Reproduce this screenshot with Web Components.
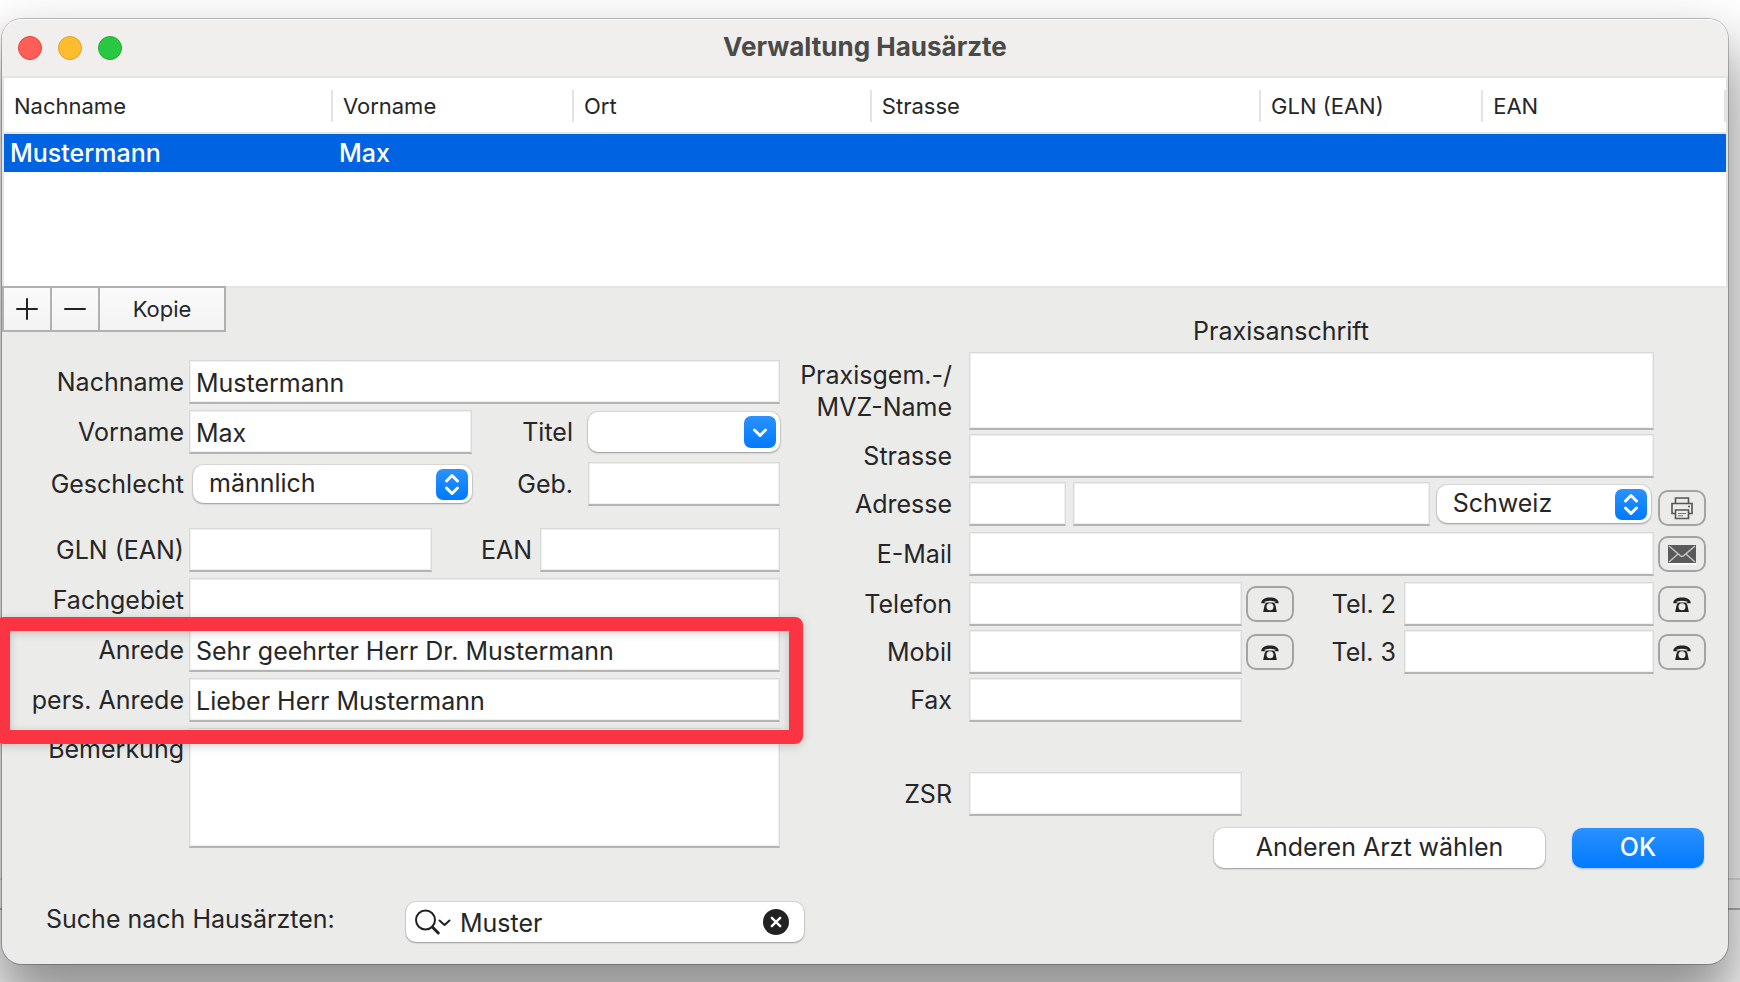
<!DOCTYPE html>
<html lang="de">
<head>
<meta charset="utf-8">
<title>Verwaltung Hausärzte</title>
<style>
  html { background: #fff; }
  body {
    margin: 0;
    min-height: 100vh;
    box-sizing: border-box;
    padding: 19px 12px 18px 2px;
    overflow: hidden;
    position: relative;
    font: 25px/32px Inter, "Liberation Sans", sans-serif;
    color: #262626;
  }
</style>
</head>
<body>
<desk-backdrop></desk-backdrop>
<mac-window heading="Verwaltung Hausärzte">
  <doctor-table></doctor-table>
  <doctor-form></doctor-form>
</mac-window>

<script>
const define = (name, html, setup) => {
  const template = document.createElement('template');
  template.innerHTML = html;
  customElements.define(name, class extends HTMLElement {
    connectedCallback() {
      if (this.shadowRoot) return;
      const root = this.attachShadow({ mode: 'open' });
      root.append(template.content.cloneNode(true));
      if (setup) setup(this, root);
    }
  });
};

/* Edges of the window that lies behind the dialog */
define('desk-backdrop', `
  <style>
    :host { position: absolute; inset: auto 0 72px 0; height: 32px; display: block;
      border-top: 2px solid #e4e4e4; border-bottom: 2px solid #b8b8b8; box-sizing: border-box; }
  </style>`);

define('mac-window', `
  <style>
    :host { display: block; position: relative; background: #ebebea; border-radius: 20px;
      box-shadow: 0 0 0 1px rgba(0,0,0,.24), 0 36px 60px 8px rgba(0,0,0,.44); }
    header { display: grid; grid-template-columns: 140px 1fr 140px; align-items: center; height: 57px;
      box-sizing: border-box; padding: 0 16px; background: #f0efed; border-radius: 20px 20px 0 0;
      box-shadow: inset 0 2px 0 -1px #fff; }
    .lights { display: flex; gap: 16px; }
    .lights button { width: 24px; height: 24px; padding: 0; border-radius: 50%; border: 1px solid var(--rim); background: var(--fill); }
    .close { --fill: #ff5f57; --rim: #e2463f; }
    .min { --fill: #febc2e; --rim: #e0a028; }
    .max { --fill: #28c840; --rim: #1fa931; }
    h1 { margin: 0; padding-bottom: 2px; font-size: 26px; line-height: 32px; font-weight: 700; color: #4a4a48; text-align: center; }
  </style>
  <header>
    <div class="lights">
      <button class="close" aria-label="Schliessen"></button>
      <button class="min" aria-label="Minimieren"></button>
      <button class="max" aria-label="Zoomen"></button>
    </div>
    <h1></h1>
  </header>
  <slot></slot>`, (host, root) => {
  root.querySelector('h1').textContent = host.getAttribute('heading');
});

define('doctor-table', `
  <style>
    :host { display: block; box-sizing: border-box; min-height: 212px; background: #fff; border: 2px solid #e4e4e3; }
    table { width: 100%; border-collapse: separate; border-spacing: 0; table-layout: fixed; }
    th { padding: 12px 0 10px; font-size: 22px; line-height: 32px; font-weight: 400; text-align: left;
      border-bottom: 2px solid #e6e6e6; }
    th span { display: block; padding-left: 10px; border-right: 2px solid #e4e4e4; }
    td { height: 38px; padding: 0 0 0 6px; line-height: 32px; color: #fff; font-weight: 500; background: #0063e1; }
  </style>
  <table>
    <colgroup><col style="width:19.100%"><col style="width:14%"><col style="width:17.300%"><col style="width:22.600%"><col style="width:12.900%"><col></colgroup>
    <thead><tr><th><span>Nachname</span></th><th><span>Vorname</span></th><th><span>Ort</span></th><th><span>Strasse</span></th><th><span>GLN (EAN)</span></th><th><span>EAN</span></th></tr></thead>
    <tbody><tr><td>Mustermann</td><td>Max</td><td></td><td></td><td></td><td></td></tr></tbody>
  </table>`);

/* Label and control in one row. kind: text | area | select | combo */
const controls = {
  text: '<input id="c" class="box">',
  area: '<textarea id="c" class="box"></textarea>',
  select: `<span class="pop"><select id="c"><option></option></select>
    <svg class="badge" viewBox="0 0 32 31"><defs><linearGradient id="g" x2="0" y2="1"><stop stop-color="#2b91ff"/><stop offset="1" stop-color="#007aff"/></linearGradient></defs>
    <rect width="32" height="31" rx="7" fill="url(#g)"/><path d="M10.500 12l5.500-5.500 5.500 5.500M10.500 19l5.500 5.500 5.500-5.500" fill="none" stroke="#fff" stroke-width="3" stroke-linecap="round" stroke-linejoin="round"/></svg></span>`,
  combo: `<span class="pop combo"><input id="c"><button class="badge" aria-label="Titel wählen"><svg viewBox="0 0 32 32"><path d="M10.500 14l5.500 5.500 5.500-5.500" fill="none" stroke="#fff" stroke-width="3" stroke-linecap="round" stroke-linejoin="round"/></svg></button></span>`
};
define('form-field', `
  <style>
    :host { display: flex; align-items: center; min-width: 0; flex: 1 1 0; }
    label { flex: 0 0 var(--label, 187px); box-sizing: border-box; padding-right: var(--label-gap, 5px);
      text-align: right; white-space: pre-line; }
    :host([area-top]) { align-items: flex-start; }
    :host([area-top]) label { padding-top: 5px; }
    input, textarea, select { font: inherit; color: inherit; box-sizing: border-box; margin: 0; outline: none; min-width: 0; }
    .box { flex: 1 1 0; width: 0; height: 44px; padding: 2px 6px 0; border: 1px solid #d9d9d8; border-bottom: 2px solid #b4b4b3;
      border-radius: 0; background: #fff; box-shadow: inset 0 0 0 1px #efefef; }
    textarea.box { height: var(--area, 120px); resize: none; }
    .pop { flex: 1 1 0; min-width: 0; position: relative; display: flex; height: 38px; margin-left: 4px; border-radius: 10px;
      background: #fff; box-shadow: 0 0 0 1px rgba(0,0,0,.07), 0 1px 2px rgba(0,0,0,.3); }
    .pop select { flex: 1; appearance: none; border: 0; background: none; padding: 0 44px 2px 16px; }
    .badge { position: absolute; right: 4px; top: 4px; width: 32px; height: 31px; pointer-events: none; }
    .combo { height: 40px; margin-left: 0; }
    .combo input { flex: 1; border: 0; background: none; padding: 0 44px 0 8px; }
    .combo .badge { height: 32px; padding: 0; border: 0; border-radius: 7px; background: linear-gradient(#2b91ff, #007aff); }
    .combo svg { display: block; }
    :host([nolabel]) .pop { margin-left: 0; }
  </style>
  <label for="c"></label>`, (host, root) => {
  const kind = host.getAttribute('kind') || 'text';
  const label = root.querySelector('label');
  const text = host.getAttribute('label').replace('|', '\n');
  if (host.hasAttribute('nolabel')) label.remove(); else label.textContent = text;
  root.append(document.createRange().createContextualFragment(controls[kind]));
  const control = root.getElementById('c');
  if (host.hasAttribute('nolabel')) control.setAttribute('aria-label', text);
  const value = host.getAttribute('value') || '';
  if (kind === 'select') control.options[0].textContent = value;
  else control.value = value;
});

const icons = {
  phone: '<path d="M15.300 17.200C15.300 13.500 19 11.600 24 11.600s8.700 1.900 8.700 5.600h-4.200v-1.700c-2.800-.9-6.200-.9-9 0v1.700z"/><path d="M20 16.500h8l1.500 3 1.300 6.500H17.200l1.300-6.500z"/><circle cx="24" cy="20.800" r="3.500" fill="#ebebea"/><path d="M18.500 16h2.500M27 16h2.500" stroke="#ebebea" stroke-width=".8"/>',
  printer: '<g fill="none" stroke="#555" stroke-width="1.600"><path d="M17.500 13.500v-5.500h13v5.500M18 23.500h-4V13.500h20v10h-4"/><path d="M17.500 20h13v8.500h-13z"/></g><path d="M20 23.500h8M20 25.800h5" stroke="#777"/><circle cx="31" cy="16.500" r="1" fill="#555"/>',
  mail: '<rect x="10" y="9" width="28" height="18" fill="#5a5a5a"/><path d="M10 28h28" stroke="#fafafa" stroke-width="2"/><path d="M11 10l10.500 9q2.500 3 5 0L37 10M11 26l9-8M37 26l-9-8" fill="none" stroke="#c4c4c4" stroke-width="1.500"/>'
};
define('icon-button', `
  <style>
    :host { display: block; flex: 0 0 48px; }
    button { display: block; width: 48px; height: 36px; padding: 0; background: none; border: 2px solid #a3a3a2; border-radius: 10px; }
    svg { display: block; width: 48px; height: 36px; margin: -2px; fill: #222; }
  </style>
  <button><svg viewBox="0 0 48 36"></svg></button>`, (host, root) => {
  root.querySelector('svg').innerHTML = icons[host.getAttribute('icon')];
  root.querySelector('button').setAttribute('aria-label', host.getAttribute('label'));
});

define('list-toolbar', `
  <style>
    :host { display: flex; width: 224px; height: 46px; margin-top: -2px; box-sizing: border-box; border: 2px solid #b1b1b0; background: #b1b1b0; gap: 2px; }
    button { flex: 0 0 46px; display: grid; place-items: center; padding: 0; border: 0; font: inherit; font-size: 22px; color: inherit;
      background: linear-gradient(#fafafa, #f3f3f3); }
    button:last-child { flex: 1; }
    svg { width: 22px; height: 22px; stroke: #222; stroke-width: 2; stroke-linecap: round; }
  </style>
  <button aria-label="Hinzufügen"><svg viewBox="0 0 22 22"><path d="M1 11h20M11 1v20"/></svg></button>
  <button aria-label="Entfernen"><svg viewBox="0 0 22 22"><path d="M1 11h20"/></svg></button>
  <button>Kopie</button>`);

define('push-button', `
  <style>
    :host { display: block; }
    button { width: 100%; height: 40px; padding: 0 0 2px; border: 0; border-radius: 10px; font: inherit; color: inherit; background: #fff;
      box-shadow: 0 0 0 1px rgba(0,0,0,.07), 0 1px 2px rgba(0,0,0,.3); }
    :host([primary]) button { color: #fff; font-weight: 500; background: linear-gradient(#2b91ff, #007aff); box-shadow: 0 1px 2px rgba(0,90,220,.3); }
  </style>
  <button><slot></slot></button>`);

define('search-row', `
  <style>
    :host { display: flex; align-items: center; }
    label { flex: 0 0 404px; box-sizing: border-box; padding: 0 0 6px 44px; }
    .field { flex: 1; min-width: 0; display: flex; align-items: center; height: 40px; box-sizing: border-box; padding: 0 15px 0 8px; border-radius: 10px;
      background: #fff; box-shadow: 0 0 0 1px rgba(0,0,0,.07), 0 1px 2px rgba(0,0,0,.3); }
    input { flex: 1; min-width: 0; height: 32px; padding: 2px 0 0 9px; border: 0; outline: none; background: none; font: inherit; color: inherit; box-sizing: border-box; }
    .glass { width: 37px; height: 28px; fill: none; stroke: #222; stroke-width: 2; stroke-linecap: round; stroke-linejoin: round; }
    button { width: 26px; height: 26px; padding: 0; border: 0; background: none; }
    button svg { display: block; }
  </style>
  <label for="q">Suche nach Hausärzten:</label>
  <div class="field">
    <svg class="glass" viewBox="0 0 37 28"><circle cx="11.500" cy="12" r="9.500"/><path d="M18.300 19l6 6" stroke-width="3"/><path d="M25.500 12.500l5 4.500 5-4.500"/></svg>
    <input id="q" value="Muster">
    <button aria-label="Suche löschen"><svg viewBox="0 0 26 26"><circle cx="13" cy="13" r="13" fill="#222"/><path d="M8.800 8.800l8.400 8.400M17.200 8.800l-8.400 8.400" stroke="#fff" stroke-width="2.400" stroke-linecap="round"/></svg></button>
  </div>`);

/* Red frame that marks a group of fields */
define('mark-frame', `
  <style>
    :host { display: block; position: absolute; inset: -11px -23px auto -6px; height: 127px; box-sizing: border-box;
      border: 14px solid #fa3442; border-radius: 8px; pointer-events: none; filter: drop-shadow(0 2px 4px rgba(0,0,0,.18)); }
  </style>`);

define('doctor-form', `
  <style>
    :host { display: grid; grid-template-columns: minmax(0, 778fr) minmax(0, 948fr); padding-bottom: 22px; }
    .row { display: flex; align-items: center; min-height: 44px; }
    .left .rows { display: grid; gap: 6px; padding-top: 28px; }
    .tall { min-height: 48px; margin-bottom: 14px; }
    .marked { position: relative; display: grid; gap: 6px; }
    .pair form-field:first-child { flex: 284 1 186px; }
    .pair form-field:last-child { flex: 192 1 116px; --label: 116px; --label-gap: 15px; }
    .codes form-field:first-child { flex: 244 1 186px; }
    .codes form-field:last-child { flex: 240 1 108px; --label: 108px; --label-gap: 8px; }
    search-row { margin: 54px -24px 0 0; }
    .right { display: grid; align-content: start; gap: 4px; padding-right: 22px; --label: 189px; --label-gap: 17px; --area: 78px; }
    h2 { margin: 27px -22px 1px 54px; font-size: 25px; line-height: 32px; font-weight: 400; text-align: center; }
    .right .row { gap: 4px; }
    .wide { padding-right: 52px; }
    .address { align-items: flex-end; }
    .address form-field:nth-child(1) { flex: 98 1 188px; }
    .address form-field:nth-child(2) { flex: 356 1 0; }
    .address form-field:nth-child(3) { flex: 214 1 0; }
    .address form-field { min-height: 44px; }
    .right .address { gap: 7px; }
    .mail { margin: 2px 0; }
    .phones form-field:nth-of-type(1) { flex: 274 1 188px; }
    .phones form-field:nth-of-type(2) { flex: 250 1 106px; --label: 106px; --label-gap: 8px; }
    .zsr { margin-top: 46px; }
    .actions { display: flex; justify-content: flex-end; gap: 27px; padding: 8px 2px 0 0; }
    .actions push-button:first-child { flex: 0 0 331px; }
    .actions push-button:last-child { flex: 0 0 132px; }
    .single { display: grid; grid-template-columns: 188px minmax(0, 274fr) 162px minmax(0, 250fr) 52px; }
    .single form-field { grid-column: 1 / 3; }
  </style>
  <section class="left">
    <list-toolbar></list-toolbar>
    <div class="rows">
      <form-field label="Nachname" value="Mustermann"></form-field>
      <div class="row pair"><form-field label="Vorname" value="Max"></form-field><form-field kind="combo" label="Titel"></form-field></div>
      <div class="row pair tall"><form-field kind="select" label="Geschlecht" value="männlich"></form-field><form-field label="Geb."></form-field></div>
      <div class="row codes"><form-field label="GLN (EAN)"></form-field><form-field label="EAN"></form-field></div>
      <form-field label="Fachgebiet"></form-field>
      <div class="marked">
        <form-field label="Anrede" value="Sehr geehrter Herr Dr. Mustermann"></form-field>
        <form-field label="pers. Anrede" value="Lieber Herr Mustermann"></form-field>
        <mark-frame></mark-frame>
      </div>
      <form-field kind="area" area-top label="Bemerkung"></form-field>
    </div>
    <search-row></search-row>
  </section>
  <section class="right">
    <h2>Praxisanschrift</h2>
    <form-field class="wide" kind="area" label="Praxisgem.-/|MVZ-Name"></form-field>
    <form-field class="wide" label="Strasse"></form-field>
    <div class="row address">
      <form-field label="Adresse"></form-field><form-field nolabel label="Ort"></form-field><form-field nolabel kind="select" label="Land" value="Schweiz"></form-field>
      <icon-button icon="printer" label="Drucken"></icon-button>
    </div>
    <div class="row mail"><form-field label="E-Mail"></form-field><icon-button icon="mail" label="E-Mail senden"></icon-button></div>
    <div class="row phones"><form-field label="Telefon"></form-field><icon-button icon="phone" label="Telefon anrufen"></icon-button><form-field label="Tel. 2"></form-field><icon-button icon="phone" label="Tel. 2 anrufen"></icon-button></div>
    <div class="row phones"><form-field label="Mobil"></form-field><icon-button icon="phone" label="Mobil anrufen"></icon-button><form-field label="Tel. 3"></form-field><icon-button icon="phone" label="Tel. 3 anrufen"></icon-button></div>
    <div class="single"><form-field label="Fax"></form-field></div>
    <div class="single zsr"><form-field label="ZSR"></form-field></div>
    <div class="actions"><push-button>Anderen Arzt wählen</push-button><push-button primary>OK</push-button></div>
  </section>`);
</script>
</body>
</html>
